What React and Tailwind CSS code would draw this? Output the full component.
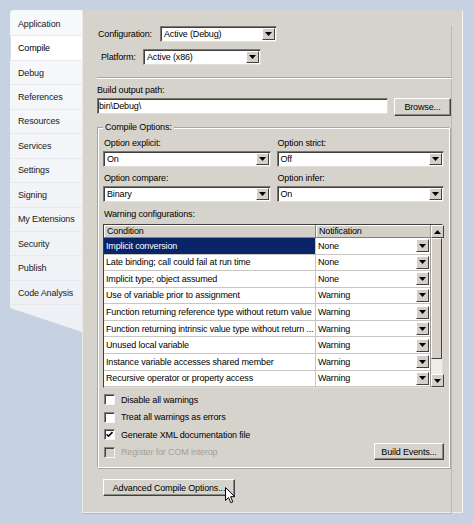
import React from 'react';

const tabs = [
  'Application',
  'Compile',
  'Debug',
  'References',
  'Resources',
  'Services',
  'Settings',
  'Signing',
  'My Extensions',
  'Security',
  'Publish',
  'Code Analysis',
];

const warnings = [
  ['Implicit conversion', 'None'],
  ['Late binding; call could fail at run time', 'None'],
  ['Implicit type; object assumed', 'None'],
  ['Use of variable prior to assignment', 'Warning'],
  ['Function returning reference type without return value', 'Warning'],
  ['Function returning intrinsic value type without return ...', 'Warning'],
  ['Unused local variable', 'Warning'],
  ['Instance variable accesses shared member', 'Warning'],
  ['Recursive operator or property access', 'Warning'],
];

const Arrow = ({ up }) => (
  <svg width="7" height="4" viewBox="0 0 7 4" className={up ? 'rotate-180' : ''}>
    <path d="M0 0h7L3.5 4z" fill="#000" />
  </svg>
);

const ArrowButton = ({ up, className = '' }) => (
  <div
    className={`w-[13px] shrink-0 flex items-center justify-center bg-[#d4d0c8] border border-t-white border-l-white border-b-[#404040] border-r-[#404040] ${className}`}
  >
    <Arrow up={up} />
  </div>
);

const Select = ({ value, className = '' }) => (
  <div
    className={`h-[16px] flex bg-white border border-t-[#7a7772] border-l-[#7a7772] border-b-[#e2dfd8] border-r-[#e2dfd8] shadow-[inset_1px_1px_0_#404040] ${className}`}
  >
    <span className="flex-1 pl-[3px] pt-[1px] leading-[13px] truncate">{value}</span>
    <ArrowButton className="my-[1px] mr-[1px]" />
  </div>
);

const Button = ({ children, className = '' }) => (
  <div
    className={`flex items-center justify-center bg-[#d6d3cc] border border-t-white border-l-white border-b-[#404040] border-r-[#404040] shadow-[inset_-1px_-1px_0_#8c8a85] ${className}`}
  >
    {children}
  </div>
);

const Checkbox = ({ label, checked, disabled }) => (
  <div className="h-[17.5px] flex items-center">
    <div
      className={`w-[11px] h-[11px] flex items-center justify-center border border-t-[#808080] border-l-[#808080] border-b-[#f4f4f4] border-r-[#f4f4f4] shadow-[inset_1px_1px_0_#404040] ${disabled ? 'bg-[#d4d0c8]' : 'bg-white'}`}
    >
      {checked && (
        <svg width="7" height="7" viewBox="0 0 7 7">
          <path d="M0.5 3.2l2 2L6.5 1" stroke="#000" strokeWidth="1.6" fill="none" />
        </svg>
      )}
    </div>
    <span className={`ml-[6px] ${disabled ? 'text-[#a3a09a]' : 'text-black'}`}>{label}</span>
  </div>
);

const Etched = ({ className = '' }) => (
  <div className={`h-[2px] border-t border-t-[#a9a59d] border-b border-b-white ${className}`} />
);

export default function App() {
  return (
    <div className="w-[473px] h-[524px] bg-[#c6d1e2] pt-[10px] pl-[10px] flex font-['Liberation_Sans',Arial,sans-serif] text-[9px] tracking-[-0.15px] leading-[12px] text-black overflow-hidden">
      {/* side tabs */}
      <div className="w-[72px] h-[322px] pt-[2px] bg-gradient-to-b from-[#f8f9fb] to-[#eef0f5] rounded-tl-[4px] [clip-path:polygon(0_0,100%_0,100%_100%,0_calc(100%-24px))]">
        {tabs.map((t) => (
          <div
            key={t}
            className={`h-[24.45px] flex items-center pl-[8px] border-b ${
              t === 'Compile'
                ? 'bg-white border-b-[#e8eaef] shadow-[inset_1px_0_0_#d8dbe2] mr-[-1px] text-black'
                : 'border-b-[#e6e8ee] text-[#1a1a1a]'
            }`}
          >
            {t}
          </div>
        ))}
      </div>

      {/* content panel */}
      <div className="w-[381px] h-[503px] bg-[#d6d3cc] border border-l-[#eceae4] border-t-[#d6d3cc] border-r-[#f6f6f4] border-b-[#eeece8]">
        <div className="w-[369px] h-[488px] border-r border-b border-[#bcb8b0]">
          <div className="flex items-center mt-[15px] ml-[15px]">
            <span className="w-[62px]">Configuration:</span>
            <Select value="Active (Debug)" className="w-[117px]" />
          </div>
          <div className="flex items-center mt-[7px] ml-[18px]">
            <span className="w-[42px]">Platform:</span>
            <Select value="Active (x86)" className="w-[118px]" />
          </div>

          <Etched className="mt-[12px] ml-[14px] w-[355px]" />

          <div className="mt-[5px] ml-[14px]">Build output path:</div>
          <div className="flex mt-[2px] ml-[14px]">
            <div className="w-[291px] h-[16px] bg-white border border-t-[#7a7772] border-l-[#7a7772] border-b-[#e2dfd8] border-r-[#e2dfd8] shadow-[inset_1px_1px_0_#404040] pl-[1px] pt-[1px] leading-[13px]">
              bin\Debug\
            </div>
            <Button className="ml-[6px] w-[57px] h-[18px]">Browse...</Button>
          </div>

          {/* compile options group */}
          <div className="relative mt-[11px] ml-[14px] w-[353px] h-[341px] border border-t-[#a9a59d] border-l-[#a9a59d] border-b-white border-r-white shadow-[inset_1px_1px_0_#fff,1px_1px_0_#a9a59d]">
            <span className="absolute left-[5px] top-[-7px] px-[2px] bg-[#d6d3cc]">Compile Options:</span>

            <div className="pl-[5px] pr-[5px]">
              <div className="grid grid-cols-2 gap-x-[6px] mt-[9px]">
                <div>
                  <div className="pl-[1px]">Option explicit:</div>
                  <Select value="On" className="mt-[2px]" />
                </div>
                <div>
                  <div className="pl-[1px]">Option strict:</div>
                  <Select value="Off" className="mt-[2px]" />
                </div>
                <div className="mt-[5px]">
                  <div className="pl-[1px]">Option compare:</div>
                  <Select value="Binary" className="mt-[2px]" />
                </div>
                <div className="mt-[5px]">
                  <div className="pl-[1px]">Option infer:</div>
                  <Select value="On" className="mt-[2px]" />
                </div>
              </div>

              <div className="mt-[6px] pl-[1px]">Warning configurations:</div>

              {/* warnings grid */}
              <div className="mt-[4px] w-[340px] h-[164px] flex border border-[#404040] border-b-[#e2dfd8] border-r-[#e2dfd8] bg-white">
                <div className="flex-1 flex flex-col">
                  <div className="h-[13px] flex bg-[#d4d0c8] border-b border-b-[#808080]">
                    <div className="w-[212px] pl-[3px] leading-[12px] border-r border-r-[#808080] shadow-[inset_1px_1px_0_#fff]">
                      Condition
                    </div>
                    <div className="flex-1 pl-[3px] leading-[12px] shadow-[inset_1px_1px_0_#fff]">Notification</div>
                  </div>
                  {warnings.map(([c, n], i) => (
                    <div key={c} className="h-[16.66px] flex border-b border-b-[#c9c6bf]">
                      <div
                        className={`w-[212px] pl-[2px] flex items-center border-r border-r-[#c9c6bf] whitespace-nowrap overflow-hidden ${
                          i === 0 ? 'bg-[#0a246a] text-white' : ''
                        }`}
                      >
                        {c}
                      </div>
                      <div className="flex-1 flex items-center pl-[2px]">
                        <span className="flex-1">{n}</span>
                        <ArrowButton className="h-[13px] mr-[1px]" />
                      </div>
                    </div>
                  ))}
                </div>
                {/* scrollbar */}
                <div className="w-[12px] flex flex-col bg-[#eeede8] border-l border-l-[#9c9a94]">
                  <ArrowButton up className="w-[12px] h-[13px]" />
                  <div className="h-[121px] bg-[#d4d0c8] border border-t-white border-l-white border-b-[#404040] border-r-[#404040]" />
                  <div className="flex-1" />
                  <ArrowButton className="w-[12px] h-[13px]" />
                </div>
              </div>

              <div className="flex justify-between items-end mt-[3px] pl-[1px]">
                <div className="flex flex-col">
                  <Checkbox label="Disable all warnings" />
                  <Checkbox label="Treat all warnings as errors" />
                  <Checkbox label="Generate XML documentation file" checked />
                  <Checkbox label="Register for COM interop" disabled />
                </div>
                <Button className="w-[70px] h-[17px] mb-[1px]">Build Events...</Button>
              </div>
            </div>
          </div>

          <div className="relative mt-[11px] ml-[20px] w-[132px]">
            <Button className="w-[132px] h-[17px]">Advanced Compile Options...</Button>
            <svg
              className="absolute left-[122px] top-[8px]"
              width="11"
              height="17"
              viewBox="0 0 11 17"
            >
              <path
                d="M0.5 0.5v13l3-3 2.3 5.2 2-.9-2.2-5.1h4.2z"
                fill="#fff"
                stroke="#000"
                strokeWidth="1"
                strokeLinejoin="round"
              />
            </svg>
          </div>
        </div>
      </div>
    </div>
  );
}
